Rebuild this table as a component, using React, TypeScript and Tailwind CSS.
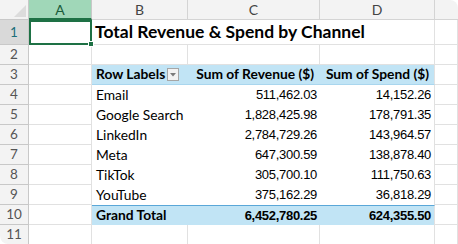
import React from "react";

const ROWS = [
  { label: "Email", revenue: "511,462.03", spend: "14,152.26" },
  { label: "Google Search", revenue: "1,828,425.98", spend: "178,791.35" },
  { label: "LinkedIn", revenue: "2,784,729.26", spend: "143,964.57" },
  { label: "Meta", revenue: "647,300.59", spend: "138,878.40" },
  { label: "TikTok", revenue: "305,700.10", spend: "111,750.63" },
  { label: "YouTube", revenue: "375,162.29", spend: "36,818.29" },
];

const font = "font-['Lato','Open_Sans',sans-serif]";
const num = "font-['Liberation_Sans',Arial,sans-serif] text-[13px] tracking-[-0.3px]";

function RowNum({ n, active = false }: { n: number; active?: boolean }) {
  return (
    <div
      className={`flex items-center justify-center border-r border-b border-[#c8c8c8] text-[13.5px] ${
        active ? "bg-[#d9d9d9] text-[#1d6f7a]" : "bg-[#f3f3f3] text-[#555]"
      }`}
    >
      {n}
    </div>
  );
}

function Cell({ className = "" }: { className?: string }) {
  return <div className={`border-r border-b border-[#e1e1e1] ${className}`} />;
}

function DropButton() {
  return (
    <div className="ml-auto mr-[9px] flex h-[13px] w-[12px] shrink-0 items-center justify-center border border-[#a6a6a6] bg-[#f2f2f2]">
      <svg width="6" height="4" viewBox="0 0 6 4">
        <path d="M0 0 L6 0 L3 3.5 Z" fill="#7a7a7a" />
      </svg>
    </div>
  );
}

export default function App() {
  return (
    <div className={`h-[244px] w-[458px] overflow-hidden bg-white ${font}`}>
      <div className="grid h-full w-full grid-cols-[29px_63px_96px_132px_115px_1fr] grid-rows-[20px_25px_repeat(10,20px)] overflow-hidden rounded-tr-[8px] rounded-bl-[8px] text-[13.8px] text-black">
        {/* column headers */}
        <div className="relative border-r border-b border-[#c8c8c8] bg-[#f3f3f3]">
          <svg className="absolute right-[2px] bottom-[2px]" width="12" height="12" viewBox="0 0 12 12">
            <path d="M12 0 L12 12 L0 12 Z" fill="#dcdcdc" />
          </svg>
        </div>
        <div className="flex items-center justify-center border-r border-b-2 border-r-[#c8c8c8] border-b-[#1e7145] bg-[#a0d7b8] text-[14px] text-[#1a5c3a]">
          A
        </div>
        {["B", "C", "D"].map((c) => (
          <div key={c} className="flex items-center justify-center border-r border-b border-[#d4d4d4] bg-[#f3f3f3] text-[14px] text-[#444]">
            {c}
          </div>
        ))}
        <div className="border-b border-[#d4d4d4] bg-[#f3f3f3]" />

        {/* row 1 */}
        <RowNum n={1} active />
        <div className="relative border-2 border-[#1e7145]">
          <div className="absolute -right-[4px] -bottom-[4px] h-[6px] w-[6px] border border-white bg-[#1e7145]" />
        </div>
        <div className="col-span-3 flex items-center border-r border-b border-[#e1e1e1] pt-[1px] pl-[3px] text-[17.5px] font-bold whitespace-nowrap">
          Total Revenue &amp; Spend by Channel
        </div>
        <Cell />

        {/* row 2 */}
        <RowNum n={2} />
        <Cell />
        <Cell />
        <Cell />
        <Cell />
        <Cell />

        {/* row 3 pivot header */}
        <RowNum n={3} />
        <Cell />
        <div className="flex items-center border-b border-[#a9d6ee] bg-[#c1e4f5] pl-[4px] font-bold whitespace-nowrap">
          Row Labels
          <DropButton />
        </div>
        <div className="flex items-center justify-end border-b border-[#a9d6ee] bg-[#c1e4f5] pr-[6px] font-bold whitespace-nowrap">
          Sum of Revenue ($)
        </div>
        <div className="flex items-center justify-end border-r border-b border-r-[#e1e1e1] border-b-[#a9d6ee] bg-[#c1e4f5] pr-[5px] font-bold whitespace-nowrap">
          Sum of Spend ($)
        </div>
        <Cell />

        {ROWS.map((r, i) => (
          <React.Fragment key={r.label}>
            <RowNum n={i + 4} />
            <Cell />
            <div className="flex items-center pl-[4px] whitespace-nowrap">{r.label}</div>
            <div className={`flex items-center justify-end pr-[3px] ${num}`}>{r.revenue}</div>
            <div className={`flex items-center justify-end border-r border-[#e1e1e1] pr-[3px] ${num}`}>{r.spend}</div>
            <Cell />
          </React.Fragment>
        ))}

        {/* grand total */}
        <RowNum n={10} />
        <Cell />
        <div className="flex items-center border-t border-[#5aa7d8] bg-[#c1e4f5] pl-[4px] font-bold">Grand Total</div>
        <div className={`flex items-center justify-end border-t border-[#5aa7d8] bg-[#c1e4f5] pr-[3px] font-bold ${num}`}>
          6,452,780.25
        </div>
        <div className={`flex items-center justify-end border-t border-r border-t-[#5aa7d8] border-r-[#e1e1e1] bg-[#c1e4f5] pr-[3px] font-bold ${num}`}>
          624,355.50
        </div>
        <Cell />

        {/* row 11 */}
        <RowNum n={11} />
        <Cell />
        <Cell />
        <Cell />
        <Cell />
        <Cell />
      </div>
    </div>
  );
}
